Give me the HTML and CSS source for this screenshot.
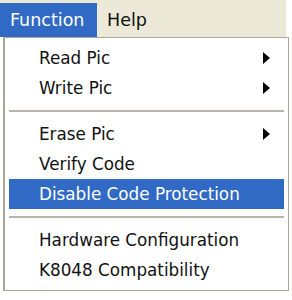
FILE: index.html
```html
<!DOCTYPE html>
<html>
<head>
<meta charset="utf-8">
<link rel="stylesheet" href="styles.css">
</head>
<body>
<div class="menubar">
  <span class="top active">Function</span>
  <span class="top">Help</span>
</div>
<div class="menu">
  <div class="item"><span>Read Pic</span><span class="arrow"></span></div>
  <div class="item"><span>Write Pic</span><span class="arrow"></span></div>
  <div class="sep"></div>
  <div class="item"><span>Erase Pic</span><span class="arrow"></span></div>
  <div class="item"><span>Verify Code</span></div>
  <div class="item hl"><span>Disable Code Protection</span></div>
  <div class="sep"></div>
  <div class="item"><span>Hardware Configuration</span></div>
  <div class="item"><span>K8048 Compatibility</span></div>
</div>
</body>
</html>
```

FILE: styles.css
```css
html, body {
  margin: 0;
  padding: 0;
  background: #ffffff;
  width: 292px;
  height: 300px;
  overflow: hidden;
  font-family: "DejaVu Sans", Tahoma, sans-serif;
  font-size: 16.8px;
  color: #111;
}
.menubar {
  width: 286px;
  height: 37px;
  background: #ECE9D8;
  display: flex;
  align-items: flex-end;
}
.top {
  height: 34px;
  display: flex;
  align-items: center;
  padding: 0 10px;
  font-size: 17.5px;
}
.top.active {
  background: #316AC5;
  color: #fff;
  width: 77px;
}
.menu {
  margin-left: 3px;
  border: 1px solid #ACA899;
  border-left-width: 2px;
  background: #fff;
  padding: 5px 4px 5px 4px;
  width: 275px;
}
.item {
  height: 30px;
  display: flex;
  align-items: center;
  justify-content: space-between;
  padding-left: 30px;
  padding-right: 14px;
}
.item.hl {
  background: #316AC5;
  color: #fff;
}
.arrow {
  width: 0;
  height: 0;
  border-top: 6px solid transparent;
  border-bottom: 6px solid transparent;
  border-left: 7px solid #000;
}
.sep {
  height: 16px;
  display: flex;
  align-items: center;
}
.sep::before {
  content: "";
  display: block;
  width: 100%;
  height: 2px;
  background: #B8B5AA;
}
```
